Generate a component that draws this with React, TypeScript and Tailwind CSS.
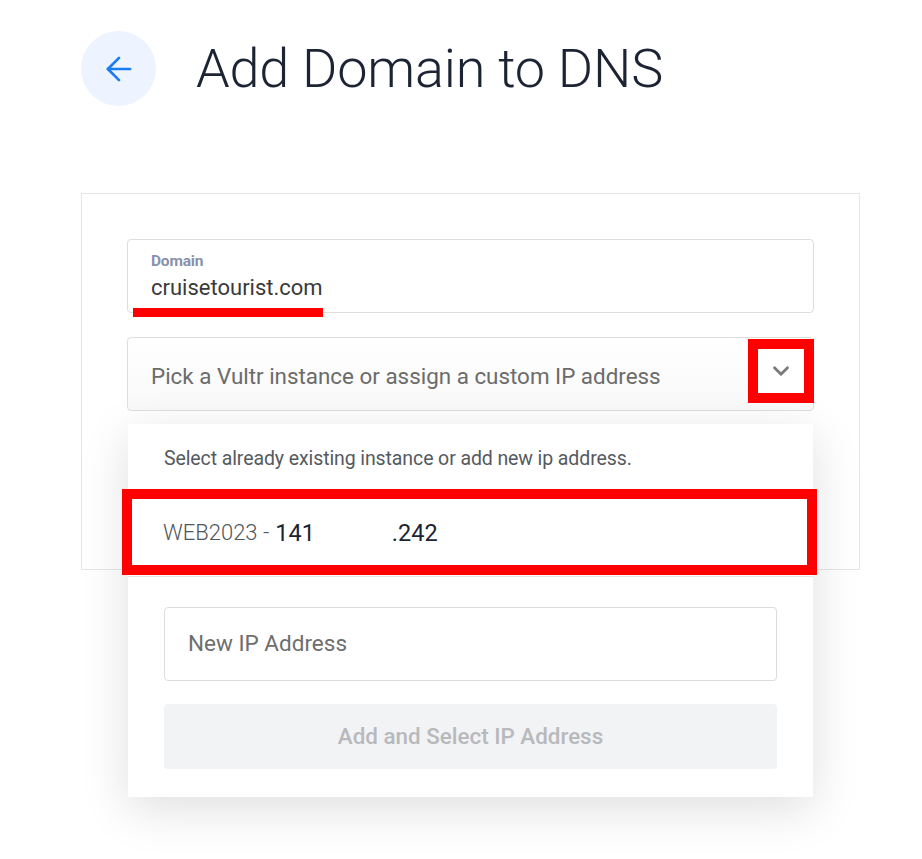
import { ArrowLeft, ChevronDown } from 'lucide-react'

function Header() {
  return (
    <div className="flex items-center gap-[40px]">
      <button className="flex h-[75px] w-[75px] items-center justify-center rounded-full bg-[#edf3ff]">
        <ArrowLeft className="h-[38px] w-[38px] text-[#1a7cf7]" strokeWidth={1.7} />
      </button>
      <h1 className="text-[54px] font-light leading-none tracking-[-0.2px] text-[#1c2333]">
        Add Domain to DNS
      </h1>
    </div>
  )
}

function IpDropdown() {
  return (
    <div className="absolute left-0 right-0 top-[calc(100%+14px)] z-10 bg-white pb-[28px] pt-[22px] shadow-[0_12px_45px_rgba(0,0,0,0.13)]">
      <p className="px-[36px] text-[19.5px] leading-[26px] tracking-[-0.1px] text-[#555a60]">
        Select already existing instance or add new ip address.
      </p>
      <div className="relative mt-[17px] flex h-[88px] items-center border-b border-[#e4e4e4] px-[36px]">
        <span className="-ml-px text-[22px] font-light text-[#505458]">WEB2023 -</span>
        <span className="ml-[6px] mt-[3px] text-[23.5px] text-[#1d2430]">141</span>
        <span className="ml-[77px] mt-[3px] text-[23.5px] text-[#1d2430]">.242</span>
        <div className="absolute -left-[6px] -right-[4px] top-0 bottom-[1px] border-[10px] border-[#ff0000]" />
      </div>
      <div className="px-[36px] pt-[30px]">
        <div className="flex h-[74px] items-center rounded-[4px] border border-[#dcdcdc] px-[23px] text-[22.5px] text-[#6e6e6e]">
          New IP Address
        </div>
        <button className="mt-[23px] flex h-[65px] w-full items-center justify-center rounded-[4px] bg-[#f2f3f5] text-[22.4px] font-medium text-[#b8b9bc]">
          Add and Select IP Address
        </button>
      </div>
    </div>
  )
}

export default function App() {
  return (
    <div className="min-h-[859px] bg-white pl-[81px] pt-[31px] font-['Roboto',sans-serif]">
      <Header />
      <div className="mt-[87px] h-[377px] w-[779px] border border-[#e6e6e6] px-[45px] pt-[45px]">
        <div className="relative h-[74px] rounded-[4px] border border-[#dedede] px-[23px] pt-[12px]">
          <div className="text-[15.5px] font-bold leading-[19px] tracking-[-0.2px] text-[#8891ab]">Domain</div>
          <div className="mt-[4px] text-[22px] leading-[26px] text-[#3a3a3a]">cruisetourist.com</div>
          <div className="absolute left-[5px] top-[68px] h-[9px] w-[190px] bg-[#ff0000]" />
        </div>
        <div className="relative mt-[24px] flex h-[74px] items-center rounded-[4px] border border-[#dedede] bg-gradient-to-b from-white to-[#f9f9f9] px-[23px]">
          <span className="mt-[5px] text-[22.4px] text-[#6b6b6b]">
            Pick a Vultr instance or assign a custom IP address
          </span>
          <div className="absolute -right-px top-[1px] flex h-[64px] w-[66px] items-center justify-center border-[10px] border-[#ff0000] bg-white">
            <ChevronDown className="h-[26px] w-[26px] text-[#7a7a7a]" strokeWidth={2.6} />
          </div>
          <IpDropdown />
        </div>
      </div>
    </div>
  )
}
